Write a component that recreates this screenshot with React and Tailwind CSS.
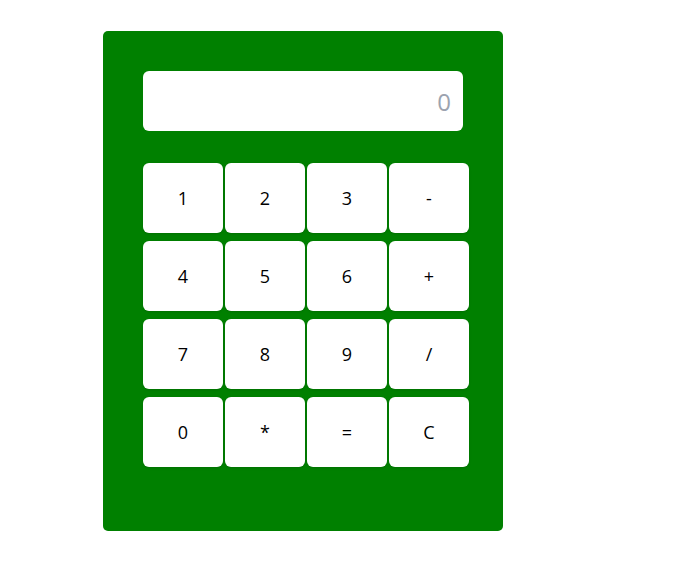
import { useState } from "react";

const keys = ["1", "2", "3", "-", "4", "5", "6", "+", "7", "8", "9", "/", "0", "*", "=", "C"];

export default function App() {
  const [value, setValue] = useState("");

  const press = (k) => {
    if (k === "C") return setValue("");
    if (k === "=") {
      try {
        // eslint-disable-next-line no-new-func
        setValue(String(Function(`return (${value})`)()));
      } catch {
        setValue("");
      }
      return;
    }
    setValue(value + k);
  };

  return (
    <div className="min-h-screen bg-white pl-[103px] pt-[31px]" style={{ fontFamily: '"Open Sans", "Noto Sans", sans-serif' }}>
      <div className="w-[400px] h-[500px] bg-[#008000] rounded-[5px] p-10">
        {/* Display */}
        <input
          type="text"
          readOnly
          value={value}
          placeholder="0"
          className="w-[320px] h-[60px] bg-white rounded-md text-right pr-3 text-2xl text-black placeholder:text-[#9ca3af] outline-none"
        />

        {/* Keypad */}
        <div className="mt-8 grid grid-cols-[repeat(4,80px)] gap-x-[2px] gap-y-2">
          {keys.map((k) => (
            <button
              key={k}
              onClick={() => press(k)}
              className="h-[70px] bg-white rounded-md text-lg text-black shadow-sm"
            >
              {k}
            </button>
          ))}
        </div>
      </div>
    </div>
  );
}
